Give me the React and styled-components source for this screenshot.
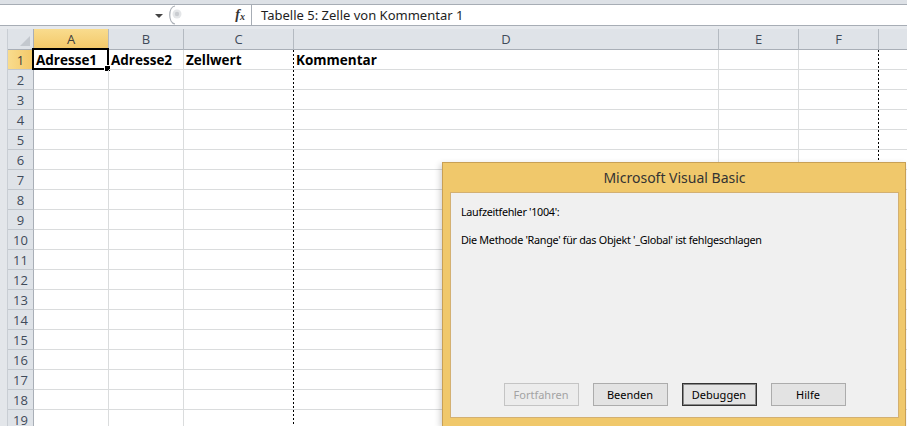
import React from "react"
import styled, { createGlobalStyle } from "styled-components"

const columns = [
  { id: "A", width: 75 },
  { id: "B", width: 75 },
  { id: "C", width: 110, pageBreak: true },
  { id: "D", width: 425 },
  { id: "E", width: 80 },
  { id: "F", width: 80, pageBreak: true },
  { id: "G", width: 40 },
]

const firstRow = ["Adresse1", "Adresse2", "Zellwert", "Kommentar", "", "", ""]
const rows = Array.from({ length: 19 }, (_, i) => i + 1)

const buttons = [
  { label: "Fortfahren", disabled: true },
  { label: "Beenden" },
  { label: "Debuggen", primary: true },
  { label: "Hilfe" },
]

const GlobalStyle = createGlobalStyle`
  html, body {
    margin: 0;
    padding: 0;
    overflow: hidden;
  }
  body {
    font-family: "Open Sans", "Liberation Sans", sans-serif;
    background: #ffffff;
  }
`

const Page = styled.div`
  position: relative;
  width: 907px;
  height: 426px;
  overflow: hidden;
  background: #e6e9ed;
  display: flex;
  flex-direction: column;
`

const TopStrip = styled.div`
  flex: 0 0 auto;
  height: 4px;
  background: #dde1e6;
  border-bottom: 1px solid #a7adb5;
`

const FormulaBar = styled.div`
  flex: 0 0 auto;
  display: flex;
  align-items: stretch;
  height: 20px;
  background: #ffffff;
  border-bottom: 1px solid #a7adb5;
`

const NameBox = styled.div`
  flex: 0 0 165px;
  display: flex;
  align-items: center;
  justify-content: flex-end;
  padding-right: 2px;
  box-sizing: border-box;
`

const DropArrow = styled.span`
  width: 0;
  height: 0;
  border-left: 4px solid transparent;
  border-right: 4px solid transparent;
  border-top: 4px solid #444;
  margin-top: 1px;
`

const Grip = styled.div`
  flex: 0 0 28px;
  display: flex;
  align-items: center;
`

const FxArea = styled.div`
  flex: 0 0 59px;
  box-sizing: border-box;
  display: flex;
  align-items: center;
  justify-content: flex-end;
  padding-right: 6px;
  font-family: "Liberation Serif", serif;
  font-style: italic;
  font-weight: bold;
  font-size: 14px;
  color: #333;
  border-right: 1px solid #a7adb5;
`

const FxSub = styled.span`
  font-size: 10px;
  margin-top: 3px;
`

const FormulaText = styled.div`
  flex: 1;
  display: flex;
  align-items: center;
  padding-left: 9px;
  font-family: "Noto Sans", "Open Sans", sans-serif;
  font-size: 13px;
  color: #1e1e1e;
`

const Gap = styled.div`
  flex: 0 0 3px;
  background: #e6e9ed;
`

const Sheet = styled.div`
  flex: 1 1 auto;
  min-height: 0;
  display: flex;
`

const LeftStrip = styled.div`
  flex: 0 0 8px;
  background: #e3e6ea;
  border-right: 1px solid #c9ced4;
  box-sizing: border-box;
`

const Grid = styled.div`
  flex: 1;
  min-width: 0;
  overflow: hidden;
  display: grid;
  grid-template-columns: 26px ${columns.map((c) => c.width + "px").join(" ")};
  grid-auto-rows: 20px;
  grid-template-rows: 21px;
  background: #ffffff;
  align-content: start;
`

const Corner = styled.div`
  position: relative;
  background: #dfe3e8;
  border-right: 1px solid #a9afb7;
  border-bottom: 1px solid #a9afb7;

  &::after {
    content: "";
    position: absolute;
    right: 3px;
    bottom: 3px;
    width: 0;
    height: 0;
    border-left: 10px solid transparent;
    border-bottom: 10px solid #c3c8ce;
  }
`

const ColHeader = styled.div`
  display: flex;
  align-items: center;
  justify-content: center;
  font-size: 13px;
  color: ${(p) => (p.$active ? "#3c3c3c" : "#3f4b5a")};
  background: ${(p) =>
    p.$active
      ? "linear-gradient(#f9dc8e, #f3c868)"
      : "#dfe3e8"};
  border-right: 1px solid #b4bac1;
  border-bottom: 1px solid ${(p) => (p.$active ? "#e0a94a" : "#a9afb7")};
  box-sizing: border-box;
`

const RowHeader = styled.div`
  display: flex;
  align-items: center;
  justify-content: center;
  font-size: 13px;
  color: ${(p) => (p.$active ? "#3c3c3c" : "#3f4b5a")};
  background: ${(p) =>
    p.$active ? "linear-gradient(90deg, #f9dc8e, #f3c868)" : "#dfe3e8"};
  border-right: 1px solid ${(p) => (p.$active ? "#e0a94a" : "#a9afb7")};
  border-bottom: 1px solid #c2c7cd;
  box-sizing: border-box;
`

const Cell = styled.div`
  position: relative;
  display: flex;
  align-items: center;
  padding-left: 2px;
  padding-top: 1px;
  font-weight: bold;
  font-size: 13.5px;
  color: #000;
  white-space: nowrap;
  border-bottom: 1px solid #dadcdd;
  border-right: ${(p) => (p.$pageBreak ? "none" : "1px solid #dadcdd")};
  background: ${(p) =>
    p.$pageBreak
      ? "linear-gradient(#000 50%, transparent 50%) right top / 1px 4px repeat-y"
      : "transparent"};
  box-sizing: border-box;
`

const Selection = styled.div`
  position: absolute;
  left: -2px;
  top: -2px;
  right: -1px;
  bottom: -1px;
  border: 2px solid #000;
  pointer-events: none;

  &::after {
    content: "";
    position: absolute;
    right: -4px;
    bottom: -4px;
    width: 5px;
    height: 5px;
    background: #000;
    border: 1px solid #fff;
  }
`

const Dialog = styled.div`
  position: absolute;
  left: 442px;
  top: 162px;
  width: 464px;
  height: 264px;
  box-sizing: border-box;
  background: #f0c86b;
  border: 1px solid #c8a056;
  border-bottom: none;
  box-shadow: -2px 2px 6px rgba(0, 0, 0, 0.18);
  display: flex;
  flex-direction: column;
  padding: 0 6px 8px 7px;
`

const DialogTitle = styled.div`
  height: 29px;
  display: flex;
  align-items: center;
  justify-content: center;
  font-family: "Noto Sans", "Open Sans", sans-serif;
  font-size: 14px;
  color: #333;
`

const DialogBody = styled.div`
  flex: 1;
  background: #f0f0f0;
  border: 1px solid #d3b072;
  display: flex;
  flex-direction: column;
  padding: 12px 10px 10px 10px;
  font-family: "Noto Sans", "Liberation Sans", sans-serif;
  font-size: 10.8px;
  letter-spacing: -0.3px;
  color: #000;
`

const Message = styled.div`
  height: 14px;
  line-height: 14px;
  margin-bottom: ${(p) => p.$gap || 0}px;
`

const ButtonRow = styled.div`
  margin-top: auto;
  display: flex;
  justify-content: center;
  gap: 14px;
  margin-bottom: 1px;
`

const Button = styled.button`
  width: 75px;
  height: 23px;
  box-sizing: border-box;
  font-family: "Noto Sans", "Liberation Sans", sans-serif;
  font-size: 11px;
  color: ${(p) => (p.disabled ? "#a3a3a3" : "#000")};
  background: ${(p) => (p.disabled ? "#ececec" : "#e3e3e3")};
  border: 1px solid ${(p) => (p.$primary ? "#333" : p.disabled ? "#c4c4c4" : "#acacac")};
  box-shadow: ${(p) => (p.$primary ? "inset 0 0 0 1px #8a8a8a" : "none")};
  padding: 0;
`

export default function App() {
  return (
    <Page>
      <GlobalStyle />
      <TopStrip />
      <FormulaBar>
        <NameBox>
          <DropArrow />
        </NameBox>
        <Grip>
          <svg width="22" height="20" viewBox="0 0 22 20">
            <path d="M10 1 C3 2 3 18 10 19" fill="none" stroke="#a9aeb5" strokeWidth="1.2" />
            <circle cx="12" cy="9" r="4.5" fill="#e4e6e8" />
            <circle cx="12" cy="9" r="2.2" fill="#c9ccd0" />
          </svg>
        </Grip>
        <FxArea>
          f<FxSub>x</FxSub>
        </FxArea>
        <FormulaText>Tabelle 5: Zelle von Kommentar 1</FormulaText>
      </FormulaBar>
      <Gap />
      <Sheet>
        <LeftStrip />
        <Grid>
          <Corner />
          {columns.map((c) => (
            <ColHeader key={c.id} $active={c.id === "A"}>
              {c.id === "G" ? "" : c.id}
            </ColHeader>
          ))}
          {rows.map((r) => (
            <React.Fragment key={r}>
              <RowHeader $active={r === 1}>{r}</RowHeader>
              {columns.map((c, i) => (
                <Cell key={c.id} $pageBreak={c.pageBreak}>
                  {r === 1 ? firstRow[i] : ""}
                  {r === 1 && i === 0 && <Selection />}
                </Cell>
              ))}
            </React.Fragment>
          ))}
        </Grid>
      </Sheet>

      <Dialog>
        <DialogTitle>Microsoft Visual Basic</DialogTitle>
        <DialogBody>
          <Message $gap={14}>Laufzeitfehler '1004':</Message>
          <Message>Die Methode 'Range' für das Objekt '_Global' ist fehlgeschlagen</Message>
          <ButtonRow>
            {buttons.map((b) => (
              <Button key={b.label} disabled={b.disabled} $primary={b.primary}>
                {b.label}
              </Button>
            ))}
          </ButtonRow>
        </DialogBody>
      </Dialog>
    </Page>
  )
}
